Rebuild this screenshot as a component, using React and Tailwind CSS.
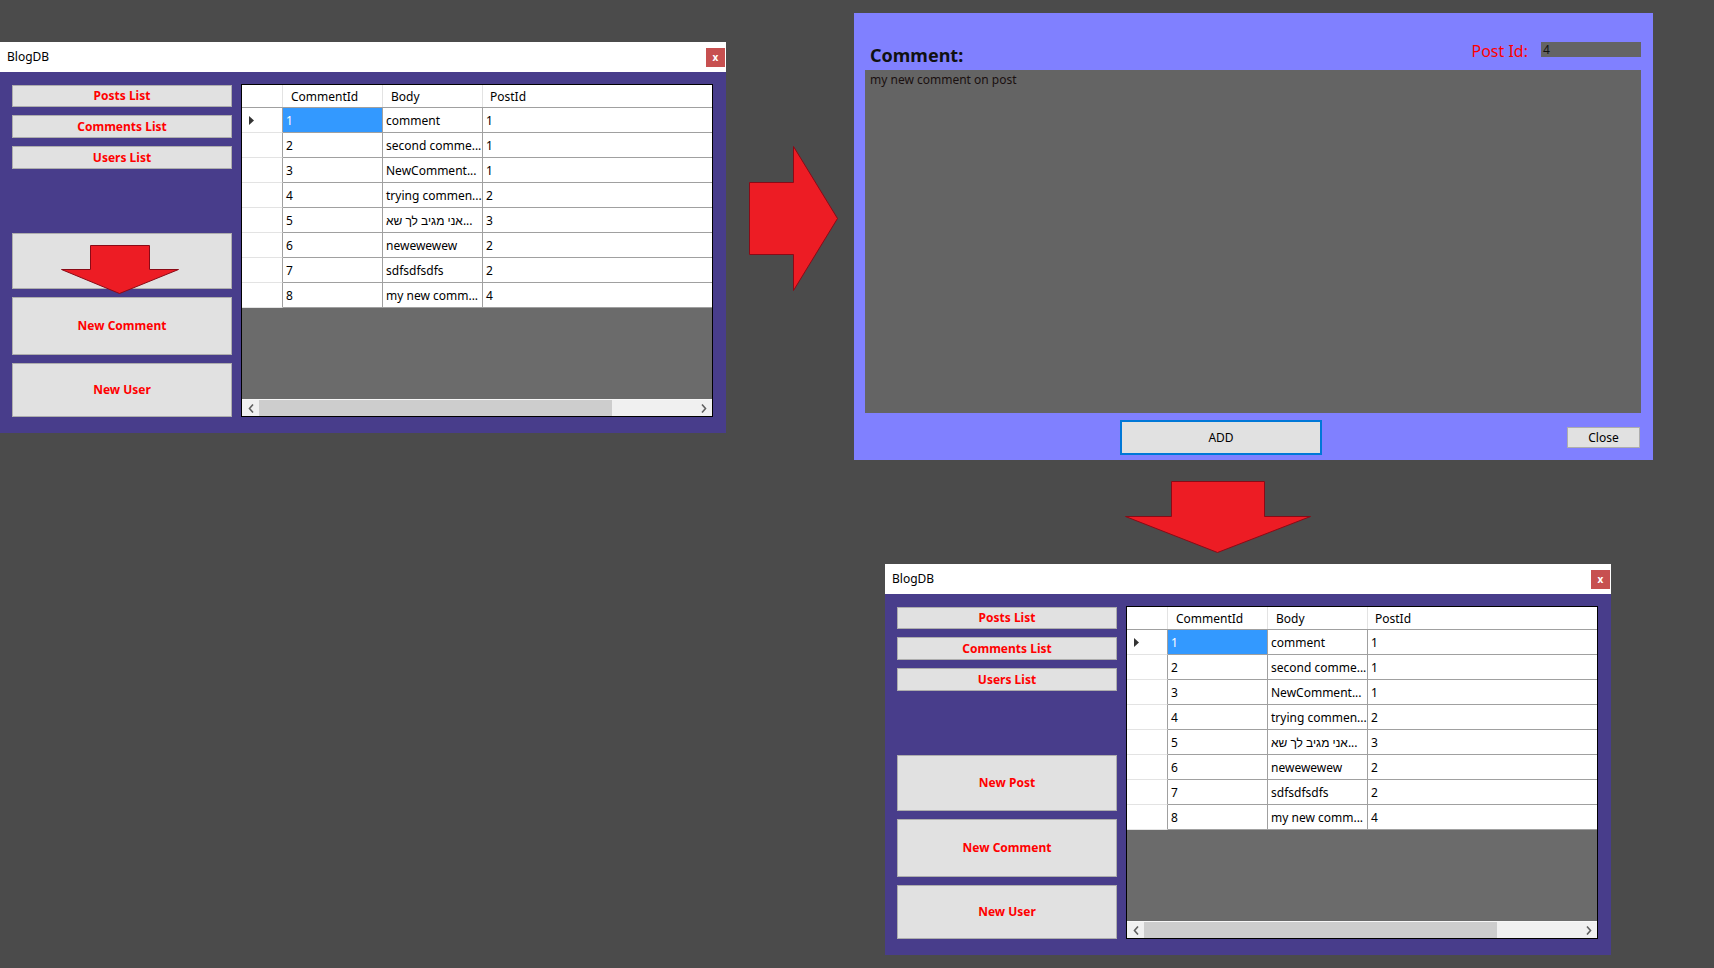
import React from 'react';

const rows = [
  { id: '1', body: 'comment', postId: '1' },
  { id: '2', body: 'second comme...', postId: '1' },
  { id: '3', body: 'NewComment...', postId: '1' },
  { id: '4', body: 'trying commen...', postId: '2' },
  { id: '5', body: 'אני מגיב לך שא...', postId: '3' },
  { id: '6', body: 'newewewew', postId: '2' },
  { id: '7', body: 'sdfsdfsdfs', postId: '2' },
  { id: '8', body: 'my new comm...', postId: '4' },
];

// Block arrow drawn the way Paint does it: flat red fill with a dark red edge
const BlockArrow = ({ className, width, height, points }) => (
  <svg className={className} width={width} height={height} viewBox={`0 0 ${width} ${height}`}>
    <polygon points={points} fill="#ed1c24" stroke="#8a0a16" strokeWidth="1" />
  </svg>
);

const SideButton = ({ label, className }) => (
  <button
    className={`w-full bg-[#e1e1e1] border border-[#adadad] text-[#ff0000] font-bold text-[12px] flex items-center justify-center ${className}`}
  >
    {label}
  </button>
);

const ScrollArrow = ({ dir }) => (
  <div className="w-[17px] h-full flex items-center justify-center">
    <svg width="6" height="9" viewBox="0 0 6 9">
      {dir === 'left' ? (
        <polyline points="5,0.5 1.5,4.5 5,8.5" fill="none" stroke="#606060" strokeWidth="1.6" />
      ) : (
        <polyline points="1,0.5 4.5,4.5 1,8.5" fill="none" stroke="#606060" strokeWidth="1.6" />
      )}
    </svg>
  </div>
);

const CommentsGrid = () => (
  <div className="ml-[9px] mt-[12px] w-[472px] h-[333px] border border-black bg-[#6b6b6b] flex flex-col text-[12px] text-black">
    {/* column headers */}
    <div className="flex h-[23px] bg-white border-b border-[#a0a0a0] shrink-0">
      <div className="w-[41px] border-r border-[#e3e3e3]" />
      <div className="w-[100px] border-r border-[#e3e3e3] pl-[8px] pt-[2px] flex items-center">CommentId</div>
      <div className="w-[100px] border-r border-[#e3e3e3] pl-[8px] pt-[2px] flex items-center">Body</div>
      <div className="w-[229px] pl-[7px] pt-[2px] flex items-center">PostId</div>
    </div>
    {rows.map((r, i) => (
      <div key={r.id} className="flex h-[25px] bg-white shrink-0">
        <div className="w-[41px] border-r border-[#a0a0a0] border-b border-b-[#e3e3e3] flex items-center pl-[7px]">
          {i === 0 && (
            <svg width="5" height="9" viewBox="0 0 5 9">
              <polygon points="0,0 5,4.5 0,9" fill="#333333" />
            </svg>
          )}
        </div>
        <div
          className={`w-[100px] border-r border-b border-[#a0a0a0] pl-[3px] pt-[2px] flex items-center ${
            i === 0 ? 'bg-[#3399ff] text-white' : ''
          }`}
        >
          {r.id}
        </div>
        <div className="w-[100px] border-r border-b border-[#a0a0a0] pl-[3px] pt-[2px] flex items-center whitespace-nowrap overflow-hidden">
          {r.body}
        </div>
        <div className="w-[229px] border-b border-[#a0a0a0] pl-[3px] pt-[2px] flex items-center">{r.postId}</div>
      </div>
    ))}
    <div className="flex-1" />
    {/* horizontal scrollbar */}
    <div className="h-[17px] flex bg-[#f0f0f0] border-t border-[#f7f7f7] shrink-0">
      <ScrollArrow dir="left" />
      <div className="w-[353px] h-full bg-[#cdcdcd]" />
      <div className="flex-1" />
      <ScrollArrow dir="right" />
    </div>
  </div>
);

const BlogWindow = ({ className, pointer }) => (
  <div className={`absolute w-[726px] h-[391px] flex flex-col ${className}`}>
    <div className="h-[30px] bg-white flex items-center justify-between pl-[7px] pr-[1px] shrink-0">
      <span className="text-[12px] text-black">BlogDB</span>
      <div className="w-[19px] h-[19px] bg-[#c75050] text-white text-[10px] font-bold flex items-center justify-center leading-none">
        x
      </div>
    </div>
    <div className="flex-1 bg-[#483d8b] flex pl-[12px]">
      <div className="w-[220px] flex flex-col pt-[13px]">
        <SideButton label="Posts List" className="h-[22px]" />
        <SideButton label="Comments List" className="h-[23px] mt-[8px]" />
        <SideButton label="Users List" className="h-[23px] mt-[8px]" />
        <SideButton label={pointer ? '' : 'New Post'} className="h-[56px] mt-[64px]" />
        <SideButton label="New Comment" className="h-[58px] mt-[8px]" />
        <SideButton label="New User" className="h-[54px] mt-[8px]" />
      </div>
      <CommentsGrid />
    </div>
    {pointer && (
      <BlockArrow
        className="absolute left-[61px] top-[203px]"
        width={119}
        height={50}
        points="29.5,0.5 88.5,0.5 88.5,24.5 117.5,24.5 58.5,48.5 0.5,24.5 29.5,24.5"
      />
    )}
  </div>
);

const AddCommentDialog = () => (
  <div className="absolute left-[854px] top-[13px] w-[799px] h-[447px] bg-[#8080ff] flex flex-col">
    <div className="h-[57px] flex items-start shrink-0">
      <span className="ml-[16px] mt-[33px] text-[18px] leading-[18px] font-bold text-[#111111]">Comment:</span>
      <div className="flex-1" />
      <span className="mt-[30px] text-[16px] leading-[16px] text-[#ff0000]">Post Id:</span>
      <div className="ml-[13px] mr-[12px] mt-[29px] w-[100px] h-[15px] bg-[#646464] text-[12px] leading-[15px] pl-[2px] text-[#111111]">
        4
      </div>
    </div>
    <div className="ml-[11px] w-[776px] h-[343px] bg-[#646464] pl-[5px] pt-[2px] text-[12px] leading-[16px] text-[#1a1010] shrink-0">
      my new comment on post
    </div>
    <div className="flex items-start">
      <button className="ml-[266px] mt-[7px] w-[202px] h-[35px] border-2 border-[#0078d7] bg-[#e1e1e1] text-[12px] text-black flex items-center justify-center">
        ADD
      </button>
      <button className="ml-[245px] mt-[14px] w-[73px] h-[21px] border border-[#adadad] bg-[#e1e1e1] text-[12px] text-black flex items-center justify-center">
        Close
      </button>
    </div>
  </div>
);

export default function App() {
  return (
    <div className="relative w-[1714px] h-[968px] overflow-hidden bg-[#4b4b4b] font-['Noto_Sans',sans-serif]">
      <BlogWindow className="left-0 top-[42px]" pointer />
      <BlockArrow
        className="absolute left-[749px] top-[146px]"
        width={90}
        height={146}
        points="0.5,36.5 44.5,36.5 44.5,0.5 88.5,72.5 44.5,144.5 44.5,108.5 0.5,108.5"
      />
      <AddCommentDialog />
      <BlockArrow
        className="absolute left-[1125px] top-[481px]"
        width={187}
        height={73}
        points="46.5,0.5 139.5,0.5 139.5,35.5 185.5,35.5 92.5,71.5 0.5,35.5 46.5,35.5"
      />
      <BlogWindow className="left-[885px] top-[564px]" />
    </div>
  );
}
